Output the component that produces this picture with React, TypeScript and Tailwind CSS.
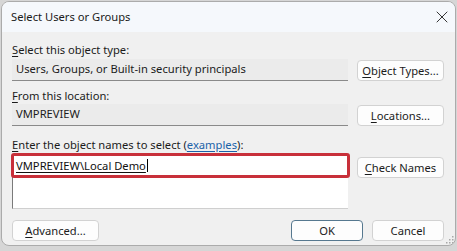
import { X } from 'lucide-react';

const font = { fontFamily: '"Segoe UI", "Noto Sans", "Open Sans", sans-serif' };

function Btn({ u, rest, w = 'w-[87px]', primary }: { u?: string; rest: string; w?: string; primary?: boolean }) {
  return (
    <button
      type="button"
      className={`h-[21px] ${w} rounded-[4px] bg-[#fdfdfd] text-[11.2px] leading-none text-[#1b1b1b] border ${
        primary ? 'border-[#56788f]' : 'border-[#d2d2d2]'
      } flex items-center justify-center`}
    >
      <span>
        {u && <span className="underline underline-offset-2">{u}</span>}
        {rest}
      </span>
    </button>
  );
}

function ReadField({ text }: { text: string }) {
  return (
    <div className="h-[22px] w-[336px] bg-[#ebebeb] border-b border-[#8a8a8a] flex items-center pl-[4px] text-[11.2px] text-[#1b1b1b]">
      {text}
    </div>
  );
}

export default function App() {
  return (
    <div className="w-[457px] h-[251px] bg-[#d6d6d6] overflow-hidden" style={font}>
      <div className="relative w-[455px] h-[245px] ml-[1px] mt-[1px] rounded-[8px] border border-[#ababab] bg-[#f0f0f0] overflow-hidden flex flex-col">
        <div className="h-[30px] shrink-0 bg-[#f5f8fc] flex items-center justify-between pl-[9px] pr-[3px]">
          <span className="text-[11.2px] text-[#1a1a1a]">Select Users or Groups</span>
          <X size={20} strokeWidth={1.1} className="text-[#222]" />
        </div>
        <div className="flex-1 flex flex-col pl-[10px] pr-[11px]">
          <div className="mt-[11px] h-[14px] text-[11.2px] text-[#1b1b1b] leading-[14px]">
            <span className="underline underline-offset-2">S</span>elect this object type:
          </div>
          <div className="mt-[2px] flex items-start justify-between">
            <ReadField text="Users, Groups, or Built-in security principals" />
            <div className="mt-[1px]">
              <Btn u="O" rest="bject Types..." />
            </div>
          </div>
          <div className="mt-[8px] h-[14px] text-[11.2px] text-[#1b1b1b] leading-[14px]">
            <span className="underline underline-offset-2">F</span>rom this location:
          </div>
          <div className="mt-[1px] flex items-start justify-between">
            <ReadField text="VMPREVIEW" />
            <div className="mt-[1px]">
              <Btn u="L" rest="ocations..." />
            </div>
          </div>
          <div className="mt-[12px] h-[14px] text-[11.2px] text-[#1b1b1b] leading-[14px]">
            <span className="underline underline-offset-2">E</span>nter the object names to select (
            <span className="text-[#1a62a8] underline underline-offset-2">examples</span>):
          </div>
          <div className="mt-[2px] flex items-start justify-between">
            <div className="relative w-[336px] h-[55px] bg-white border-l border-[#7a7a7a] border-b border-b-[#cfcfcf]">
              <div className="absolute left-[-2px] top-[-1px] w-[339px] h-[25px] rounded-[3px] border-[3px] border-[#c8303a]" />
              <div className="pl-[3px] pt-[5px] text-[11.2px] leading-[13px] text-[#111] flex items-center">
                <span className="underline underline-offset-2">VMPREVIEW\Local Demo</span>
                <span className="w-px h-[13px] bg-black ml-[1px]" />
              </div>
            </div>
            <div className="mt-[3px]">
              <Btn u="C" rest="heck Names" />
            </div>
          </div>
          <div className="mt-[11px] flex items-center">
            <Btn u="A" rest="dvanced..." />
            <div className="ml-auto flex gap-[9px]">
              <Btn rest="OK" w="w-[72px]" primary />
              <Btn rest="Cancel" w="w-[72px]" />
            </div>
          </div>
        </div>
        <svg className="absolute right-[1px] bottom-[1px]" width="8" height="8" viewBox="0 0 8 8" fill="#a8a8a8">
          <rect x="6" y="0" width="1.5" height="1.5" />
          <rect x="3" y="3" width="1.5" height="1.5" />
          <rect x="6" y="3" width="1.5" height="1.5" />
          <rect x="0" y="6" width="1.5" height="1.5" />
          <rect x="3" y="6" width="1.5" height="1.5" />
          <rect x="6" y="6" width="1.5" height="1.5" />
        </svg>
      </div>
    </div>
  );
}
